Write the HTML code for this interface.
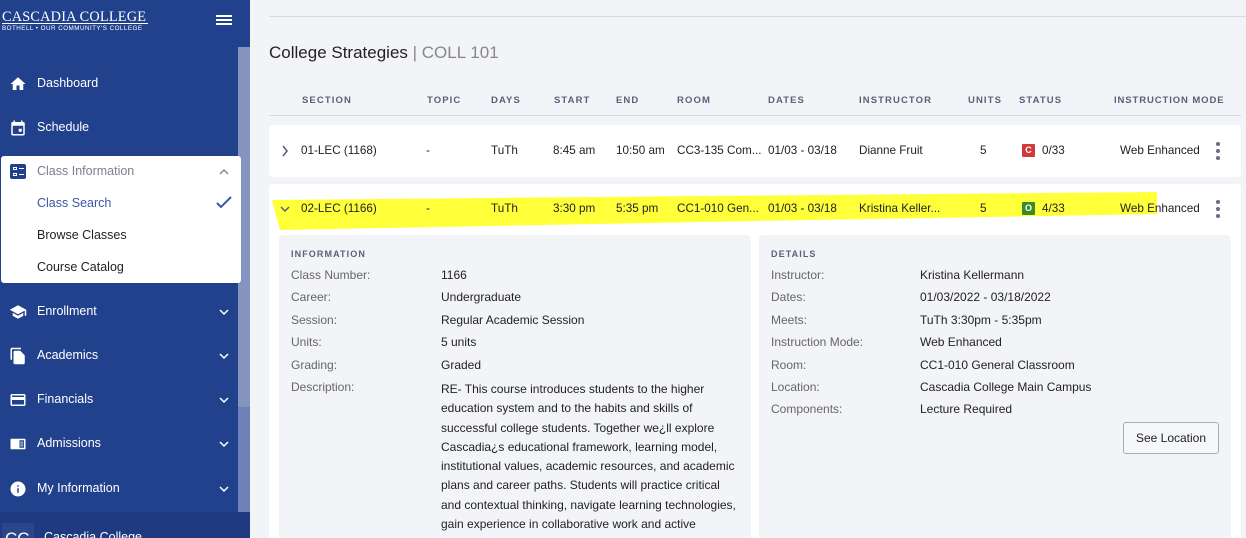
<!DOCTYPE html>
<html style="height:538px;overflow:hidden"><head><meta charset="utf-8"><style>
*{margin:0;padding:0;box-sizing:border-box}
body{width:1246px;height:538px;overflow:hidden;position:relative;background:#f3f4f8;font-family:"Liberation Sans",Arial,sans-serif;color:#222}
.a{position:absolute;white-space:nowrap}
#sb{position:absolute;left:0;top:0;width:250px;height:538px;background:#22418c}
.nav{position:absolute;left:37px;color:#fff;font-size:12.5px}
.ic{position:absolute;left:9px;width:18px;height:18px}
.h{font-size:9.5px;font-weight:bold;color:#5a6077;letter-spacing:1.1px}
.t{font-size:11.7px;color:#222}
.lb{font-size:12px;color:#666}
.v{font-size:12px;color:#222}
</style></head><body>
<div id="sb">
 <div class="a" style="left:2px;top:9px;color:#fff;font-family:'Liberation Serif',serif;font-size:14.3px;letter-spacing:0.2px">CASCADIA COLLEGE</div>
 <div class="a" style="left:2px;top:23px;width:146px;border-top:1px solid #fff"></div>
 <div class="a" style="left:2px;top:25px;color:#fff;font-size:6.3px;letter-spacing:0.45px">BOTHELL • OUR COMMUNITY'S COLLEGE</div>
 <div class="a" style="left:216px;top:15px;width:16px;height:2px;background:#fff;box-shadow:0 4px 0 #fff,0 8px 0 #fff"></div>
 <div class="a" style="left:238px;top:47px;width:12px;height:360px;background:#8593bf"></div>
 <div class="a" style="left:238px;top:407px;width:12px;height:105px;background:#6f80b6"></div>
 <svg class="ic" style="top:75px" viewBox="0 0 24 24"><path fill="#fff" d="M10 20v-6h4v6h5v-8h3L12 3 2 12h3v8z"/></svg>
 <div class="nav" style="top:76px">Dashboard</div>
 <svg class="ic" style="top:119px" viewBox="0 0 24 24"><path fill="#fff" d="M19 4h-1V2h-2v2H8V2H6v2H5a2 2 0 0 0-2 2v14a2 2 0 0 0 2 2h14a2 2 0 0 0 2-2V6a2 2 0 0 0-2-2zm0 16H5V9h14zm-6-7h4v4h-4z"/></svg>
 <div class="nav" style="top:120px">Schedule</div>
 <div class="a" style="left:1px;top:156px;width:240px;height:127px;background:#fff;border-radius:3px"></div>
 <div class="a" style="left:10px;top:164px;width:16px;height:15px;background:#22418c;border-radius:2px"></div>
 <div class="a" style="left:13px;top:167px;width:4px;height:3px;border:1px solid #fff"></div>
 <div class="a" style="left:13px;top:173px;width:4px;height:3px;border:1px solid #fff"></div>
 <div class="a" style="left:19px;top:168px;width:5px;height:1px;background:#fff"></div>
 <div class="a" style="left:19px;top:174px;width:5px;height:1px;background:#fff"></div>
 <div class="nav" style="top:164px;color:#7a7f8e">Class Information</div>
 <svg class="a" style="left:218px;top:168px" width="12" height="8" viewBox="0 0 12 8"><path d="M2 6l4-4 4 4" stroke="#888" stroke-width="1.5" fill="none"/></svg>
 <div class="nav" style="top:196px;color:#3d57a4">Class Search</div>
 <svg class="a" style="left:216px;top:196px" width="16" height="13" viewBox="0 0 16 13"><path d="M1 7l4 4 10-10" stroke="#3d57a4" stroke-width="2" fill="none"/></svg>
 <div class="nav" style="top:228px;color:#222">Browse Classes</div>
 <div class="nav" style="top:260px;color:#222">Course Catalog</div>
 <svg class="ic" style="top:303px" viewBox="0 0 24 24"><path fill="#fff" d="M5 13.2v4L12 21l7-3.8v-4L12 17zM12 3L1 9l11 6 9-4.9V17h2V9z"/></svg>
 <div class="nav" style="top:304px">Enrollment</div>
 <svg class="ic" style="top:347px" viewBox="0 0 24 24"><path fill="#fff" d="M16 1H4a2 2 0 0 0-2 2v14h2V3h12zm-1 4l6 6v10a2 2 0 0 1-2 2H8a2 2 0 0 1-2-2V7a2 2 0 0 1 2-2z"/></svg>
 <div class="nav" style="top:348px">Academics</div>
 <svg class="ic" style="top:391px" viewBox="0 0 24 24"><path fill="#fff" d="M20 4H4a2 2 0 0 0-2 2v12a2 2 0 0 0 2 2h16a2 2 0 0 0 2-2V6a2 2 0 0 0-2-2zm0 14H4v-6h16zm0-10H4V6h16z"/></svg>
 <div class="nav" style="top:392px">Financials</div>
 <svg class="ic" style="top:435px" viewBox="0 0 24 24"><path fill="#fff" d="M21 5H3a1 1 0 0 0-1 1v12a1 1 0 0 0 1 1h18a1 1 0 0 0 1-1V6a1 1 0 0 0-1-1zm-1 12h-6V7h6zm-5-8h4v1h-4zm0 2.5h4v1h-4zm0 2.5h4v1h-4z"/></svg>
 <div class="nav" style="top:436px">Admissions</div>
 <svg class="ic" style="top:480px" viewBox="0 0 24 24"><path fill="#fff" d="M12 2a10 10 0 1 0 0 20 10 10 0 0 0 0-20zm1 15h-2v-6h2zm0-8h-2V7h2z"/></svg>
 <div class="nav" style="top:481px">My Information</div>
 <svg class="a" style="left:218px;top:308px" width="12" height="8"><path d="M2 2l4 4 4-4" stroke="#fff" stroke-width="1.5" fill="none"/></svg>
 <svg class="a" style="left:218px;top:352px" width="12" height="8"><path d="M2 2l4 4 4-4" stroke="#fff" stroke-width="1.5" fill="none"/></svg>
 <svg class="a" style="left:218px;top:396px" width="12" height="8"><path d="M2 2l4 4 4-4" stroke="#fff" stroke-width="1.5" fill="none"/></svg>
 <svg class="a" style="left:218px;top:440px" width="12" height="8"><path d="M2 2l4 4 4-4" stroke="#fff" stroke-width="1.5" fill="none"/></svg>
 <svg class="a" style="left:218px;top:485px" width="12" height="8"><path d="M2 2l4 4 4-4" stroke="#fff" stroke-width="1.5" fill="none"/></svg>
 <div class="a" style="left:0;top:512px;width:250px;height:26px;background:#1f3a80"></div>
 <div class="a" style="left:2px;top:523px;width:32px;height:15px;background:#2a4588;overflow:hidden"><div style="color:#fff;font-size:17px;padding-left:3px;padding-top:6px">CC</div></div>
 <div class="a" style="left:44px;top:530px;color:#fff;font-size:12.5px">Cascadia College</div>
</div>

<div class="a" style="left:269px;top:16px;width:977px;border-top:1px solid #d6d9e6"></div>
<div class="a" style="left:269px;top:43px;font-size:17px;color:#222">College Strategies <span style="color:#888">| COLL 101</span></div>
<div class="a h" style="left:302px;top:95px">SECTION</div>
<div class="a h" style="left:427px;top:95px">TOPIC</div>
<div class="a h" style="left:491px;top:95px">DAYS</div>
<div class="a h" style="left:554px;top:95px">START</div>
<div class="a h" style="left:616px;top:95px">END</div>
<div class="a h" style="left:677px;top:95px">ROOM</div>
<div class="a h" style="left:768px;top:95px">DATES</div>
<div class="a h" style="left:859px;top:95px">INSTRUCTOR</div>
<div class="a h" style="left:968px;top:95px">UNITS</div>
<div class="a h" style="left:1019px;top:95px">STATUS</div>
<div class="a h" style="left:1114px;top:95px;letter-spacing:0.9px">INSTRUCTION MODE</div>
<div class="a" style="left:269px;top:115px;width:972px;border-top:1px solid #d6d9e6"></div>

<div class="a" style="left:269px;top:125px;width:972px;height:52px;background:#fff;border-radius:4px"></div>
<svg class="a" style="left:281px;top:145px" width="8" height="12"><path d="M2 1l4 5-4 5" stroke="#555a70" stroke-width="1.5" fill="none"/></svg>
<div class="a t" style="left:301px;top:144px">01-LEC (1168)</div>
<div class="a t" style="left:426px;top:144px">-</div>
<div class="a t" style="left:491px;top:144px">TuTh</div>
<div class="a t" style="left:553px;top:144px">8:45 am</div>
<div class="a t" style="left:616px;top:144px">10:50 am</div>
<div class="a t" style="left:677px;top:144px">CC3-135 Com...</div>
<div class="a t" style="left:768px;top:144px">01/03 - 03/18</div>
<div class="a t" style="left:859px;top:144px">Dianne Fruit</div>
<div class="a t" style="left:980px;top:144px">5</div>
<div class="a" style="left:1022px;top:144px;width:13px;height:13px;background:#d23a3a;color:#fff;font-size:9px;font-weight:bold;text-align:center;line-height:13px;border-radius:1px">C</div>
<div class="a t" style="left:1042px;top:144px">0/33</div>
<div class="a t" style="left:1120px;top:144px">Web Enhanced</div>

<div class="a" style="left:269px;top:184px;width:972px;height:354px;background:#fff;border-radius:4px 4px 0 0"></div>
<svg class="a" style="left:0;top:0" width="1246" height="538"><path d="M272 200 L700 196 L1157 192 L1157 214 L700 222 L280 230 Z" fill="#ffff3a"/></svg>
<svg class="a" style="left:279px;top:205px" width="12" height="8"><path d="M2 2l4 4 4-4" stroke="#555a70" stroke-width="1.5" fill="none"/></svg>
<div class="a t" style="left:301px;top:202px">02-LEC (1166)</div>
<div class="a t" style="left:426px;top:202px">-</div>
<div class="a t" style="left:491px;top:202px">TuTh</div>
<div class="a t" style="left:553px;top:202px">3:30 pm</div>
<div class="a t" style="left:616px;top:202px">5:35 pm</div>
<div class="a t" style="left:677px;top:202px">CC1-010 Gen...</div>
<div class="a t" style="left:768px;top:202px">01/03 - 03/18</div>
<div class="a t" style="left:859px;top:202px">Kristina Keller...</div>
<div class="a t" style="left:980px;top:202px">5</div>
<div class="a" style="left:1022px;top:202px;width:13px;height:13px;background:#3a8a2a;color:#fff;font-size:9px;font-weight:bold;text-align:center;line-height:13px;border-radius:1px">O</div>
<div class="a t" style="left:1042px;top:202px">4/33</div>
<div class="a t" style="left:1120px;top:202px">Web Enhanced</div>
<div class="a" style="left:1216px;top:142px;width:4px;height:4px;border-radius:2px;background:#666c88;box-shadow:0 7px 0 #666c88,0 14px 0 #666c88"></div>
<div class="a" style="left:1216px;top:200px;width:4px;height:4px;border-radius:2px;background:#666c88;box-shadow:0 7px 0 #666c88,0 14px 0 #666c88"></div>

<div class="a" style="left:279px;top:235px;width:472px;height:303px;background:#f3f4f8;border-radius:4px 4px 0 0"></div>
<div class="a" style="left:759px;top:235px;width:472px;height:303px;background:#f3f4f8;border-radius:4px 4px 0 0"></div>
<div class="a h" style="left:291px;top:249px;font-size:9px">INFORMATION</div>
<div class="a h" style="left:771px;top:249px;font-size:9px">DETAILS</div>

<div class="a lb" style="left:291px;top:268px">Class Number:</div><div class="a v" style="left:441px;top:268px">1166</div>
<div class="a lb" style="left:291px;top:290px">Career:</div><div class="a v" style="left:441px;top:290px">Undergraduate</div>
<div class="a lb" style="left:291px;top:313px">Session:</div><div class="a v" style="left:441px;top:313px">Regular Academic Session</div>
<div class="a lb" style="left:291px;top:335px">Units:</div><div class="a v" style="left:441px;top:335px">5 units</div>
<div class="a lb" style="left:291px;top:358px">Grading:</div><div class="a v" style="left:441px;top:358px">Graded</div>
<div class="a lb" style="left:291px;top:380px">Description:</div>
<div class="a v" style="left:441px;top:380px;line-height:19.3px">RE- This course introduces students to the higher<br>education system and to the habits and skills of<br>successful college students. Together we¿ll explore<br>Cascadia¿s educational framework, learning model,<br>institutional values, academic resources, and academic<br>plans and career paths. Students will practice critical<br>and contextual thinking, navigate learning technologies,<br>gain experience in collaborative work and active<br>learning, and develop information literacy skills. By the</div>

<div class="a lb" style="left:771px;top:268px">Instructor:</div><div class="a v" style="left:920px;top:268px">Kristina Kellermann</div>
<div class="a lb" style="left:771px;top:290px">Dates:</div><div class="a v" style="left:920px;top:290px">01/03/2022 - 03/18/2022</div>
<div class="a lb" style="left:771px;top:313px">Meets:</div><div class="a v" style="left:920px;top:313px">TuTh 3:30pm - 5:35pm</div>
<div class="a lb" style="left:771px;top:335px">Instruction Mode:</div><div class="a v" style="left:920px;top:335px">Web Enhanced</div>
<div class="a lb" style="left:771px;top:358px">Room:</div><div class="a v" style="left:920px;top:358px">CC1-010 General Classroom</div>
<div class="a lb" style="left:771px;top:380px">Location:</div><div class="a v" style="left:920px;top:380px">Cascadia College Main Campus</div>
<div class="a lb" style="left:771px;top:402px">Components:</div><div class="a v" style="left:920px;top:402px">Lecture Required</div>
<div class="a" style="left:1123px;top:422px;width:96px;height:32px;border:1px solid #aab;border-radius:3px;background:#f6f7fa;font-size:12px;text-align:center;line-height:30px">See Location</div>
</body></html>
